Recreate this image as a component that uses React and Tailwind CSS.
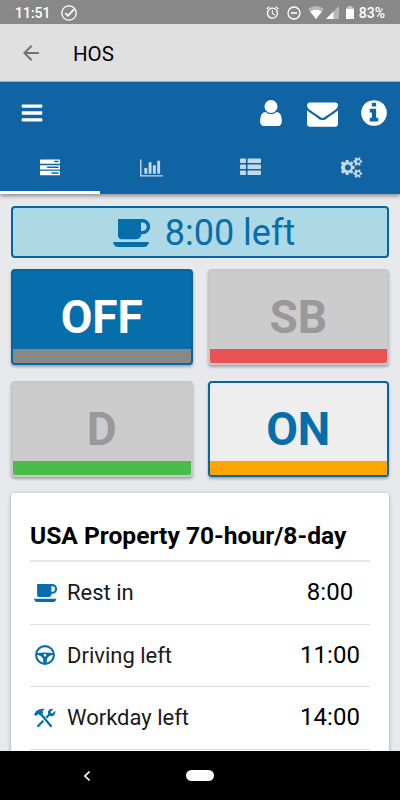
import React from 'react';
import { MdAlarm } from 'react-icons/md';

const BARS_ROW = 'q0 26-19 45t-45 19h-1408q-26 0-45-19t-19-45v-128q0-26 19-45t45-19h1408q26 0 45 19t19 45z';
const TASK_ROW = 'v256q0 26-19 45t-45 19h-1664q-26 0-45-19t-19-45v-256q0-26 19-45t45-19h1664q26 0 45 19t19 45z';
const LIST_DOT = 'v192q0 40-28 68t-68 28h-320q-40 0-68-28t-28-68v-192q0-40 28-68t68-28h320q40 0 68 28t28 68z';
const LIST_LINE = 'v192q0 40-28 68t-68 28h-960q-40 0-68-28t-28-68v-192q0-40 28-68t68-28h960q40 0 68 28t28 68z';
const SMALL_COG =
  'v140q0 16-149 31-12 27-30 52 51 113 51 138 0 4-4 7-122 71-124 71-8 0-46-47t-52-68q-20 2-30 2t-30-2q-14 21-52 68t-46 47q-2 0-124-71-4-3-4-7 0-25 51-138-18-25-30-52-149-15-149-31v-140q0-16 149-31 13-29 30-52-51-113-51-138 0-4 4-7 4-2 35-20t59-34 30-16q8 0 46 46.5t52 67.5q20-2 30-2t30 2q51-71 92-112l6-2q4 0 124 70 4 3 4 7 0 25-51 138 17 23 30 52 149 15 149 31z';

const paths = {
  bars: `M1664 1344v128${BARS_ROW}M1664 832v128${BARS_ROW}M1664 320v128${BARS_ROW}`,
  user: 'M1280 1271q0 109-62.5 187t-150.5 78h-854q-88 0-150.5-78t-62.5-187q0-85 8.5-160.5t31.5-152 58.5-131 94-89 134.5-34.5q131 128 313 128t313-128q76 0 134.5 34.5t94 89 58.5 131 31.5 152 8.5 160.5zm-256-887q0 159-112.5 271.5t-271.5 112.5-271.5-112.5-112.5-271.5 112.5-271.5 271.5-112.5 271.5 112.5 112.5 271.5z',
  envelope:
    'M1792 710v794q0 66-47 113t-113 47h-1472q-66 0-113-47t-47-113v-794q44 49 101 87 362 246 497 345 57 42 92.5 65.5t94.5 48 110 24.5h2q51 0 110-24.5t94.5-48 92.5-65.5q170-123 498-345 57-39 100-87zm0-294q0 79-49 151t-122 123q-376 261-468 325-10 7-42.5 31t-54 38.5-52 32.5-57.5 27-50 9h-2q-23 0-50-9t-57.5-27-52-32.5-54-38.5-42.5-31q-91-64-262-182.5t-205-142.5q-62-42-117-115.5t-55-136.5q0-78 41.5-130t118.5-52h1472q65 0 112.5 47t47.5 113z',
  info: 'M1152 1376v-160q0-14-9-23t-23-9h-96v-512q0-14-9-23t-23-9h-320q-14 0-23 9t-9 23v160q0 14 9 23t23 9h96v320h-96q-14 0-23 9t-9 23v160q0 14 9 23t23 9h448q14 0 23-9t9-23zm-128-896v-160q0-14-9-23t-23-9h-192q-14 0-23 9t-9 23v160q0 14 9 23t23 9h192q14 0 23-9t9-23zm640 416q0 209-103 385.5t-279.5 279.5-385.5 103-385.5-103-279.5-279.5-103-385.5 103-385.5 279.5-279.5 385.5-103 385.5 103 279.5 279.5 103 385.5z',
  tasks: `M1024 1408h640v-128h-640v128zm-384-512h1024v-128h-1024v128zm640-512h384v-128h-384v128zM1792 1216${TASK_ROW}M1792 704${TASK_ROW}M1792 192${TASK_ROW}`,
  chart:
    'M640 896v512h-256v-512h256zm384-512v1024h-256v-1024h256zm1024 1152v128h-2048v-1536h128v1408h1920zm-640-896v768h-256v-768h256zm384-384v1152h-256v-1152h256z',
  list: `M512 1248${LIST_DOT}M512 736${LIST_DOT}M512 224${LIST_DOT}M1792 1248${LIST_LINE}M1792 736${LIST_LINE}M1792 224${LIST_LINE}`,
  cogs: `M832 896q0-106-75-181t-181-75-181 75-75 181 75 181 181 75 181-75 75-181zm768 512q0-52-38-90t-90-38-90 38-38 90q0 53 37.5 90.5t90.5 37.5 90.5-37.5 37.5-90.5zm0-1024q0-52-38-90t-90-38-90 38-38 90q0 53 37.5 90.5t90.5 37.5 90.5-37.5 37.5-90.5zm-448 421v185q0 10-7 19.5t-16 10.5l-155 24q-11 35-32 76 34 48 90 115 7 11 7 20 0 12-7 19-23 30-82.5 89.5t-78.5 59.5q-11 0-21-7l-115-90q-37 19-77 31-11 108-23 155-7 24-30 24h-186q-11 0-20-7.5t-10-17.5l-23-153q-34-10-75-31l-118 89q-7 7-20 7-11 0-21-8-144-133-144-160 0-9 7-19 10-14 41-53t47-61q-23-44-35-82l-152-24q-10-1-17-9.5t-7-19.5v-185q0-10 7-19.5t16-10.5l155-24q11-35 32-76-34-48-90-115-7-11-7-20 0-12 7-20 22-30 82-89t79-59q11 0 21 7l115 90q34-18 77-32 11-108 23-154 7-24 30-24h186q11 0 20 7.5t10 17.5l23 153q34 10 75 31l118-89q8-7 20-7 11 0 21 8 144 133 144 160 0 8-7 19-12 16-42 54t-45 60q23 48 34 82l152 23q10 2 17 10.5t7 19.5zM1792 1338${SMALL_COG}M1792 314${SMALL_COG}`,
};

const Icon = ({ name, box = '0 0 1792 1792', className }) => (
  <svg viewBox={box} className={className} fill="currentColor" fillRule="evenodd">
    <path d={paths[name]} />
  </svg>
);

const Cup = ({ className }) => (
  <svg viewBox="0 0 37 28" preserveAspectRatio="none" className={className} fill="currentColor" fillRule="evenodd">
    <path d="M5 0h24.500a7.500 7.500 0 0 1 0 15.300H28.300a5 5 0 0 1-4.800 5H9A4 4 0 0 1 5 16.300zM28 3.500v8.500h1.500a4.250 4.250 0 0 0 0-8.500zM0 23h36q-1 5-5 5H5q-4 0-5-5z" />
  </svg>
);

const Wheel = ({ className }) => (
  <svg viewBox="0 0 20 20" className={className} fill="none" stroke="currentColor">
    <circle cx="10" cy="10" r="8.900" strokeWidth="2.100" />
    <path
      d="M1.500 8.200q8.500-1.600 17 0v1.700h-1.500q-3.500.6-5 3.600L11.600 18.500H8.400L8 13.500q-1.500-3-5-3.600H1.500zM10 9a1.300 1.300 0 1 0 0 2.600A1.300 1.300 0 0 0 10 9z"
      fill="currentColor"
      fillRule="evenodd"
      stroke="none"
    />
  </svg>
);

const Tools = ({ className }) => (
  <svg viewBox="0 0 22 20" className={className} fill="none" stroke="currentColor">
    <path d="M7.500 6.700l10 12M3.500 18.700l5.800-6M12.300 9.700l4-4.200" strokeWidth="2.300" />
    <path d="M0 6.500l2-3.200Q5.500-.2 11 .9 8.500 2 8.500 3.500L9.200 5.200 6.200 8 4.500 5.900 1.800 8z" fill="currentColor" stroke="none" />
    <path d="M19.300.9l-2.600 2.900.4 1.400 1.400.3 2.800-2.900q.7 3.300-1.400 4.900-1.900 1.200-4.100.3L14 6q-.6-2.200.8-3.900 1.800-1.800 4.500-1.200z" fill="currentColor" stroke="none" />
  </svg>
);

const tabs = [
  { name: 'tasks', className: 'h-5 w-5 text-white' },
  { name: 'chart', box: '0 0 2048 1792', className: 'ml-[3px] h-5 w-[23px] text-white/75' },
  { name: 'list', className: 'h-[21px] w-[21px] text-white/75' },
  { name: 'cogs', box: '0 0 1856 1792', className: 'ml-[3px] h-[21px] w-[22px] text-white/75' },
];

const duties = [
  { label: 'OFF', button: 'border-[#0765a3] bg-[#076eac] text-white', bar: 'bg-[#888]' },
  { label: 'SB', button: 'border-[#c8c8c8] bg-[#ccc] text-[#999]', bar: 'bg-[#ea5354]' },
  { label: 'D', button: 'border-[#c8c8c8] bg-[#ccc] text-[#999]', bar: 'bg-[#49bc49]' },
  { label: 'ON', button: 'border-[#0765a3] bg-[#eee] text-[#076eac]', bar: 'bg-[#ffa500]' },
];

const limits = [
  { label: 'Rest in', time: '8:00', icon: <Cup className="h-[18px] w-[23px]" /> },
  { label: 'Driving left', time: '11:00', icon: <Wheel className="ml-px h-5 w-5" /> },
  { label: 'Workday left', time: '14:00', icon: <Tools className="h-5 w-[22px]" /> },
];

const StatusBar = () => (
  <div className="flex h-6 shrink-0 items-center bg-[#888] pl-[15px] pr-[15px] pt-px text-sm font-medium text-white">
    <span className="w-[46px]">11:51</span>
    <svg viewBox="0 0 16 16" className="h-4 w-4" fill="none" stroke="currentColor" strokeWidth="1.300">
      <circle cx="8" cy="8" r="7.200" />
      <path d="M4.300 8.200l2.600 2.600 6.300-6.600" strokeWidth="1.700" />
    </svg>
    <MdAlarm className="ml-auto h-[15px] w-[15px]" />
    <svg viewBox="0 0 14 14" className="ml-[7px] h-[14px] w-[14px]" fill="none" stroke="currentColor" strokeWidth="1.300">
      <circle cx="7" cy="7" r="6" />
      <path d="M4 7h6" strokeWidth="1.600" />
    </svg>
    <svg viewBox="0 0 16 13" className="ml-[7px] h-[13px] w-4" fill="currentColor">
      <path d="M0 3q8-6 16 0L8 13z" opacity=".4" />
      <path d="M2.300 5.800q5.700-4 11.400 0L8 13z" />
    </svg>
    <svg viewBox="0 0 13 13" className="ml-[2px] h-[13px] w-[13px]" fill="currentColor">
      <path d="M13 0v13H0z" opacity=".4" />
      <path d="M7.500 5.500V13H0z" />
    </svg>
    <svg viewBox="0 0 8 13" className="ml-[7px] mr-[5px] h-[13px] w-2" fill="currentColor">
      <path d="M2 0h4v1.500H8V3H0V1.500h2z" opacity=".5" />
      <path d="M0 3h8v10H0z" />
    </svg>
    <span>83%</span>
  </div>
);

const App = () => {
  return (
    <div className="flex h-screen w-full flex-col overflow-hidden bg-[#e8e9ed] font-['Roboto',sans-serif] text-black">
      <StatusBar />

      <div className="flex h-[58px] shrink-0 items-center border-b border-[#b5b5b5] bg-[#e0e0e0] pl-[23px]">
        <svg viewBox="0 0 16 16" className="h-4 w-4 text-[#737373]" fill="none" stroke="currentColor" strokeWidth="2">
          <path d="M16 8H1.500M8.700.7L1.400 8l7.300 7.300" />
        </svg>
        <h1 className="ml-[34px] pt-[3px] text-[20.500px]">HOS</h1>
      </div>

      <header className="z-10 h-[112px] shrink-0 bg-[#1164a3] text-white shadow-[0_2px_4px_rgba(0,0,0,0.4)]">
        <div className="flex h-[62px] items-center pl-5 pr-[11px]">
          <Icon name="bars" className="h-6 w-6" />
          <Icon name="user" box="0 0 1280 1536" className="ml-auto h-[26px] w-[22px]" />
          <Icon name="envelope" className="ml-[25px] h-[31px] w-[31px]" />
          <Icon name="info" className="ml-[21px] h-[30px] w-[30px]" />
        </div>
        <nav className="grid h-[50px] grid-cols-4">
          {tabs.map((tab, index) => (
            <button
              key={tab.name}
              className={`flex items-center justify-center border-b-[3px] ${index === 0 ? 'border-white' : 'border-transparent'}`}
            >
              <Icon {...tab} />
            </button>
          ))}
        </nav>
      </header>

      <main className="min-h-0 flex-1 overflow-hidden px-[11px] pt-3">
        <div className="flex h-[52px] items-center justify-center gap-[15px] rounded border-2 border-[#0765a3] bg-[#add8e6] pl-2 pt-px text-[#076eac]">
          <Cup className="h-7 w-[37px]" />
          <span className="text-4xl">8:00 left</span>
        </div>

        <div className="mt-[11px] grid grid-cols-2 gap-x-[15px] gap-y-4">
          {duties.map((duty) => (
            <button
              key={duty.label}
              className={`flex h-24 flex-col overflow-hidden rounded border-2 shadow-[0_2px_3px_rgba(0,0,0,0.3)] ${duty.button}`}
            >
              <span className="flex w-full flex-1 items-center justify-center pt-[13px] text-[46px] font-bold leading-none">
                {duty.label}
              </span>
              <span className={`h-[14px] w-full ${duty.bar}`} />
            </button>
          ))}
        </div>

        <section className="mt-4 h-[400px] rounded-t bg-white px-[19px] pt-[18px] shadow-[0_1px_4px_rgba(0,0,0,0.3)]">
          <h2 className="flex h-[51px] items-center whitespace-nowrap border-b-2 border-[#e6e6e6] pt-0.5 text-[24.600px] font-bold">
            USA Property 70-hour/8-day
          </h2>
          {limits.map((limit) => (
            <div key={limit.label} className="flex h-[62.500px] items-center border-b border-[#dedede]">
              <span className="flex w-[37px] items-center pl-1 text-[#076eac]">{limit.icon}</span>
              <span className="text-[22px] text-[#1a1a1a]">{limit.label}</span>
              <span className="-mr-px ml-auto w-[82px] pb-px text-center text-2xl">{limit.time}</span>
            </div>
          ))}
        </section>
      </main>

      <footer className="grid h-[49px] shrink-0 grid-cols-[1fr_28px_1fr] items-center bg-black">
        <svg viewBox="0 0 6 10" className="ml-[84px] h-[10px] w-[6px]" fill="none" stroke="white" strokeWidth="1.600">
          <path d="M5.500.5L1 5l4.500 4.500" />
        </svg>
        <span className="h-[11px] rounded-full bg-white" />
      </footer>
    </div>
  );
};

export default App;
